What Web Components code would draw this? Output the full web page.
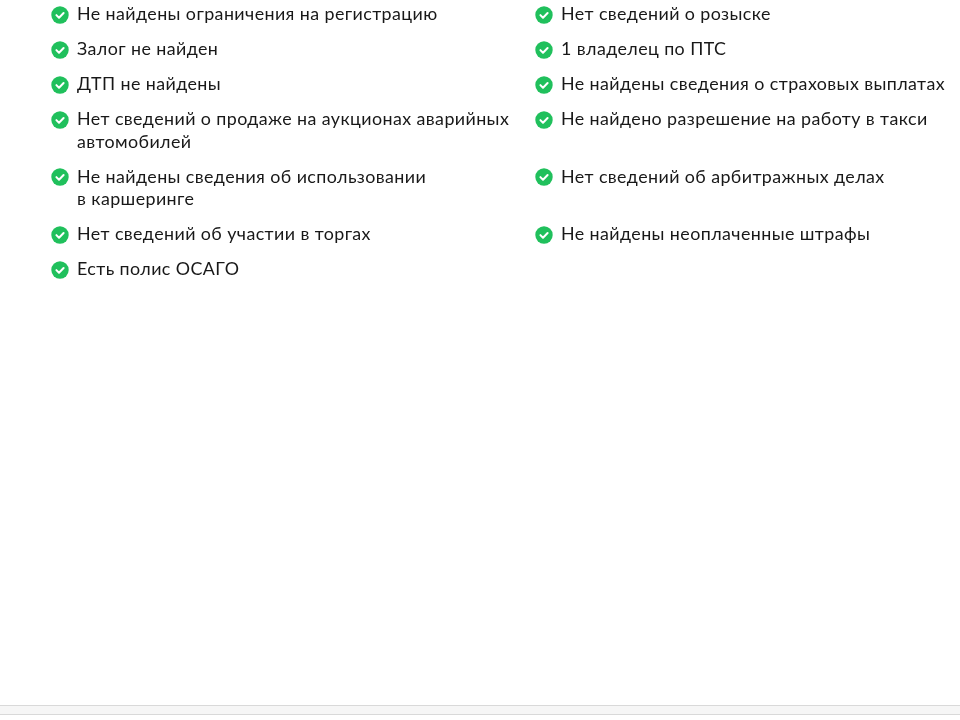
<!DOCTYPE html>
<html lang="ru">
<head>
<meta charset="utf-8">
<title>Отчёт</title>
<style>
html, body { margin: 0; height: 100%; background: #fff; }
body { display: flex; flex-direction: column; height: 720px; overflow: hidden; }
</style>
</head>
<body>
<check-list>
    <check-item>Не найдены ограничения на регистрацию</check-item>
    <check-item>Нет сведений о розыске</check-item>
    <check-item>Залог не найден</check-item>
    <check-item>1 владелец по ПТС</check-item>
    <check-item>ДТП не найдены</check-item>
    <check-item>Не найдены сведения о страховых выплатах</check-item>
    <check-item>Нет сведений о продаже на аукционах аварийных автомобилей</check-item>
    <check-item>Не найдено разрешение на работу в такси</check-item>
    <check-item>Не найдены сведения об использовании<br>в каршеринге</check-item>
    <check-item>Нет сведений об арбитражных делах</check-item>
    <check-item>Нет сведений об участии в торгах</check-item>
    <check-item>Не найдены неоплаченные штрафы</check-item>
    <check-item>Есть полис ОСАГО</check-item>
</check-list>
<page-bar></page-bar>
<script>
class CheckList extends HTMLElement{
    constructor(){
        super();
        this.attachShadow({mode:'open'}).innerHTML = `
        <style>
        :host{
            display:grid;
            grid-template-columns:484px 1fr;
            row-gap:12.5px;
            align-content:start;
            flex:1;
            padding:3px 0 0 51px;
            font-family:Lato, sans-serif;
            font-size:17.85px;
            line-height:22.5px;
            letter-spacing:.415px;
            color:#181818;
            filter:blur(.35px);
        }
        </style>
        <slot></slot>
        `;
    }
}

class CheckItem extends HTMLElement{
    constructor(){
        super();
        this.attachShadow({mode:'open'}).innerHTML = `
        <style>
        :host{
            display:flex;
            gap:8px;
            align-items:flex-start;
        }
        svg{
            flex:none;
            width:18px;
            height:18px;
            margin-top:2.5px;
            overflow:visible;
        }
        div{
            margin-top:-1px;
            padding-bottom:1px;
        }
        </style>
        <svg viewBox="0 0 18 18">
            <circle cx="9" cy="9" r="8.7" fill="#20c05c"/>
            <path d="M5.4 9.1l2.6 2.6 4.6-4.7" fill="none" stroke="#fff" stroke-width="2" stroke-linecap="round" stroke-linejoin="round"/>
        </svg>
        <div><slot></slot></div>
        `;
    }
}

class PageBar extends HTMLElement{
    constructor(){
        super();
        this.attachShadow({mode:'open'}).innerHTML = `
        <style>
        :host{
            display:block;
            box-sizing:border-box;
            height:10px;
            margin-bottom:5px;
            background:#f6f6f6;
            border-top:1px solid #d9d9d9;
            border-bottom:1px solid #d9d9d9;
        }
        </style>
        `;
    }
}

customElements.define('check-list', CheckList);
customElements.define('check-item', CheckItem);
customElements.define('page-bar', PageBar);
</script>
</body>
</html>
